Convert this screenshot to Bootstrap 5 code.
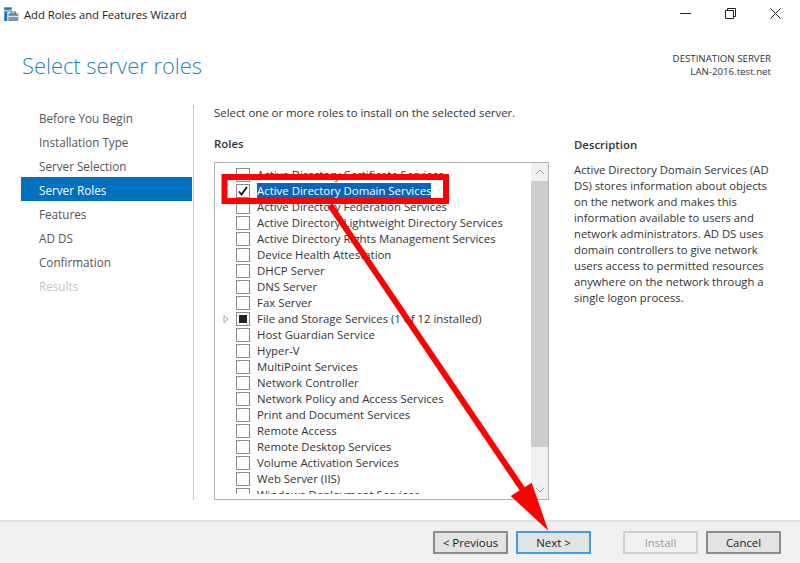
<!DOCTYPE html>
<html lang="en"><head><meta charset="utf-8"><title>Add Roles and Features Wizard</title>
<link href="https://cdn.jsdelivr.net/npm/bootstrap@5.3.0/dist/css/bootstrap.min.css" rel="stylesheet">
<style>
html,body{height:100%;margin:0}
body{width:800px;height:563px;overflow:hidden;background:#fff;font-family:"Open Sans","Noto Sans",sans-serif;font-size:11.4px;color:#333;line-height:16px}
.wiz{position:relative;height:563px}
.tbar{height:30px;padding-left:4px;color:#222;font-size:11.25px}
.winbtn{width:45px;height:26px}
.winbtns{margin-right:2px;padding-bottom:4px}
.headrow{height:62px;padding-left:22px;padding-right:29px}
.pagetitle{font-size:21.9px;font-weight:300;color:#1a86b4;line-height:30px;margin:21px 0 0}
.dest{font-size:9.7px;line-height:13px;color:#333;margin-top:22px}
.mainrow{height:428px}
.side{width:171px;margin-left:21px;padding-top:14px;flex:none}
.stepitem{height:24px;line-height:24px;padding-left:18px;color:#555;font-size:11.7px}
.stepitem.cur{background:#0070c0;color:#fff;margin:-1px 0 1px;line-height:26px}
.stepitem.off{color:#c4c4c4}
.vline{width:1px;background:#c9c9c9;margin:13px 0 20px 1px;flex:none}
.content{padding-left:20px;width:380px;flex:none}
.intro{margin-top:13px;height:16px}
.hdlabel{font-weight:600;margin-top:15px;height:16px}
.listbox{margin-top:10px;width:335px;height:338px;border:1px solid #b4b4b4;overflow:hidden;background:#fff}
.listinner{padding-top:4px;margin-bottom:5px;flex:1;min-width:0;overflow:hidden}
.rolerow{height:16px;padding-left:7px;white-space:nowrap}
.cb{width:14px;height:14px;border:1px solid #8a8a8a;flex:none;margin-left:14px;margin-right:7px;background:#fff}
.cb.part span{display:block;width:8px;height:8px;margin:2px;background:#222}
.rolerow.sel .rolelabel{background:#0a64ba;color:#fff}
.expander{width:14px;margin-left:-4px;margin-right:-10px;flex:none}
.sbar{width:17px;background:#f0f0f0;flex:none}
.sbtn{height:18px;color:#a6a6a6}
.sthumb{height:266px;background:#cdcdcd}
.desc{width:200px;flex:none;margin-top:45px}
.desc-h{font-weight:600;height:16px;margin-bottom:9px}
.desc p{margin:0;color:#333;font-size:11.3px}
.footbar{position:absolute;left:0;right:0;bottom:0;height:43px;background:#f1f0f1;border-top:2px solid #e4e2e4;padding:9px 19px 0 0}
.wbtn{width:75px;height:23px;line-height:19px;padding:0;font-size:11.4px;color:#222;background:#e3e3e3;border:2px solid #8c8c8c;border-radius:0}
.wbtn.focus{border-color:#3e9ee6;background:#e3e3e3}
.wbtn:disabled{opacity:1;color:#9c9c9c;background:#f1f1f1;border-color:#cfcfcf}
.gap-s{margin-left:8px}.gap-l{margin-left:32px}
.annot{position:absolute;left:0;top:0;pointer-events:none}
</style></head>
<body>
<div class="wiz d-flex flex-column">
  <div class="tbar d-flex align-items-center">
    <svg width="20" height="18" viewBox="0 0 20 18"><rect x=".3" y="1.300" width="7.400" height="2.600" fill="#1077c8"/><rect x=".3" y="4.500" width="7.400" height="1.300" fill="#4aa3dd"/><rect x=".3" y="5.800" width="3" height="9.200" fill="#1077c8"/><rect x="4.300" y="7.300" width="10" height="7.700" fill="#7d97a8"/><rect x="4.300" y="10" width="10" height="1" fill="#dbe5ea"/><rect x="7" y="6" width="4.500" height="2" fill="none" stroke="#5a7688"/></svg>
    <span>Add Roles and Features Wizard</span>
    <div class="winbtns ms-auto d-flex">
      <div class="winbtn d-flex align-items-center justify-content-center"><svg width="11" height="11"><path d="M0 5.500H11" stroke="#222"/></svg></div>
      <div class="winbtn d-flex align-items-center justify-content-center"><svg width="11" height="11"><path d="M.5 2.500h8v8h-8zM2.500 2.500V.5h8v8H8.500" fill="none" stroke="#222"/></svg></div>
      <div class="winbtn d-flex align-items-center justify-content-center"><svg width="11" height="11"><path d="M.5 .5L10.500 10.500M10.500 .5L.5 10.500" stroke="#222"/></svg></div>
    </div>
  </div>
  <div class="headrow d-flex justify-content-between align-items-start">
    <h1 class="pagetitle">Select server roles</h1>
    <div class="dest text-end">DESTINATION SERVER<br>LAN-2016.test.net</div>
  </div>
  <div class="mainrow d-flex">
    <div class="side">
      <div class="stepitem">Before You Begin</div>
      <div class="stepitem">Installation Type</div>
      <div class="stepitem">Server Selection</div>
      <div class="stepitem cur">Server Roles</div>
      <div class="stepitem">Features</div>
      <div class="stepitem">AD DS</div>
      <div class="stepitem">Confirmation</div>
      <div class="stepitem off">Results</div>
    </div>
    <div class="vline"></div>
    <div class="content">
      <div class="intro">Select one or more roles to install on the selected server.</div>
      <div class="hdlabel">Roles</div>
      <div class="listbox d-flex">
        <div class="listinner">
          <div class="rolerow d-flex align-items-center"><span class="cb"></span><span class="rolelabel">Active Directory Certificate Services</span></div>
          <div class="rolerow sel d-flex align-items-center"><span class="cb d-flex align-items-center justify-content-center"><svg width="10" height="10"><path d="M1 5.500L3.500 8.500L9 1" fill="none" stroke="#111" stroke-width="1.800"/></svg></span><span class="rolelabel">Active Directory Domain Services</span></div>
          <div class="rolerow d-flex align-items-center"><span class="cb"></span><span class="rolelabel">Active Directory Federation Services</span></div>
          <div class="rolerow d-flex align-items-center"><span class="cb"></span><span class="rolelabel">Active Directory Lightweight Directory Services</span></div>
          <div class="rolerow d-flex align-items-center"><span class="cb"></span><span class="rolelabel">Active Directory Rights Management Services</span></div>
          <div class="rolerow d-flex align-items-center"><span class="cb"></span><span class="rolelabel">Device Health Attestation</span></div>
          <div class="rolerow d-flex align-items-center"><span class="cb"></span><span class="rolelabel">DHCP Server</span></div>
          <div class="rolerow d-flex align-items-center"><span class="cb"></span><span class="rolelabel">DNS Server</span></div>
          <div class="rolerow d-flex align-items-center"><span class="cb"></span><span class="rolelabel">Fax Server</span></div>
          <div class="rolerow d-flex align-items-center"><svg class="expander" width="14" height="10" viewBox="0 0 14 10"><path d="M6 1.500L10 5L6 8.500z" fill="#fff" stroke="#a6a6a6"/></svg><span class="cb part"><span></span></span><span class="rolelabel">File and Storage Services (1 of 12 installed)</span></div>
          <div class="rolerow d-flex align-items-center"><span class="cb"></span><span class="rolelabel">Host Guardian Service</span></div>
          <div class="rolerow d-flex align-items-center"><span class="cb"></span><span class="rolelabel">Hyper-V</span></div>
          <div class="rolerow d-flex align-items-center"><span class="cb"></span><span class="rolelabel">MultiPoint Services</span></div>
          <div class="rolerow d-flex align-items-center"><span class="cb"></span><span class="rolelabel">Network Controller</span></div>
          <div class="rolerow d-flex align-items-center"><span class="cb"></span><span class="rolelabel">Network Policy and Access Services</span></div>
          <div class="rolerow d-flex align-items-center"><span class="cb"></span><span class="rolelabel">Print and Document Services</span></div>
          <div class="rolerow d-flex align-items-center"><span class="cb"></span><span class="rolelabel">Remote Access</span></div>
          <div class="rolerow d-flex align-items-center"><span class="cb"></span><span class="rolelabel">Remote Desktop Services</span></div>
          <div class="rolerow d-flex align-items-center"><span class="cb"></span><span class="rolelabel">Volume Activation Services</span></div>
          <div class="rolerow d-flex align-items-center"><span class="cb"></span><span class="rolelabel">Web Server (IIS)</span></div>
          <div class="rolerow d-flex align-items-center"><span class="cb"></span><span class="rolelabel">Windows Deployment Services</span></div>
        </div>
        <div class="sbar d-flex flex-column">
          <div class="sbtn d-flex align-items-center justify-content-center"><svg width="10" height="6"><path d="M1 5L5 1L9 5" fill="none" stroke="#a6a6a6"/></svg></div>
          <div class="sthumb"></div>
          <div class="sbtn mt-auto d-flex align-items-center justify-content-center"><svg width="10" height="6"><path d="M1 1L5 5L9 1" fill="none" stroke="#a6a6a6"/></svg></div>
        </div>
      </div>
    </div>
    <div class="desc">
      <div class="desc-h">Description</div>
      <p>Active Directory Domain Services (AD DS) stores information about objects on the network and makes this information available to users and network administrators. AD DS uses domain controllers to give network users access to permitted resources anywhere on the network through a single logon process.</p>
    </div>
  </div>
  <div class="footbar d-flex justify-content-end">
    <button class="btn wbtn" type="button">&lt; Previous</button>
    <button class="btn wbtn focus gap-s" type="button">Next &gt;</button>
    <button class="btn wbtn gap-l" type="button" disabled>Install</button>
    <button class="btn wbtn gap-s" type="button">Cancel</button>
  </div>
  <svg class="annot" width="800" height="563" viewBox="0 0 800 563">
    <rect x="224.500" y="177" width="221.500" height="24" fill="none" stroke="#f00" stroke-width="6"/>
    <path d="M330 205L523 490" stroke="#f00" stroke-width="6" fill="none"/>
    <path d="M548.300 530.700L510.700 496L531.700 482.700z" fill="#f00"/>
  </svg>
</div>
<script src="https://cdn.jsdelivr.net/npm/bootstrap@5.3.0/dist/js/bootstrap.bundle.min.js"></script>
</body></html>
